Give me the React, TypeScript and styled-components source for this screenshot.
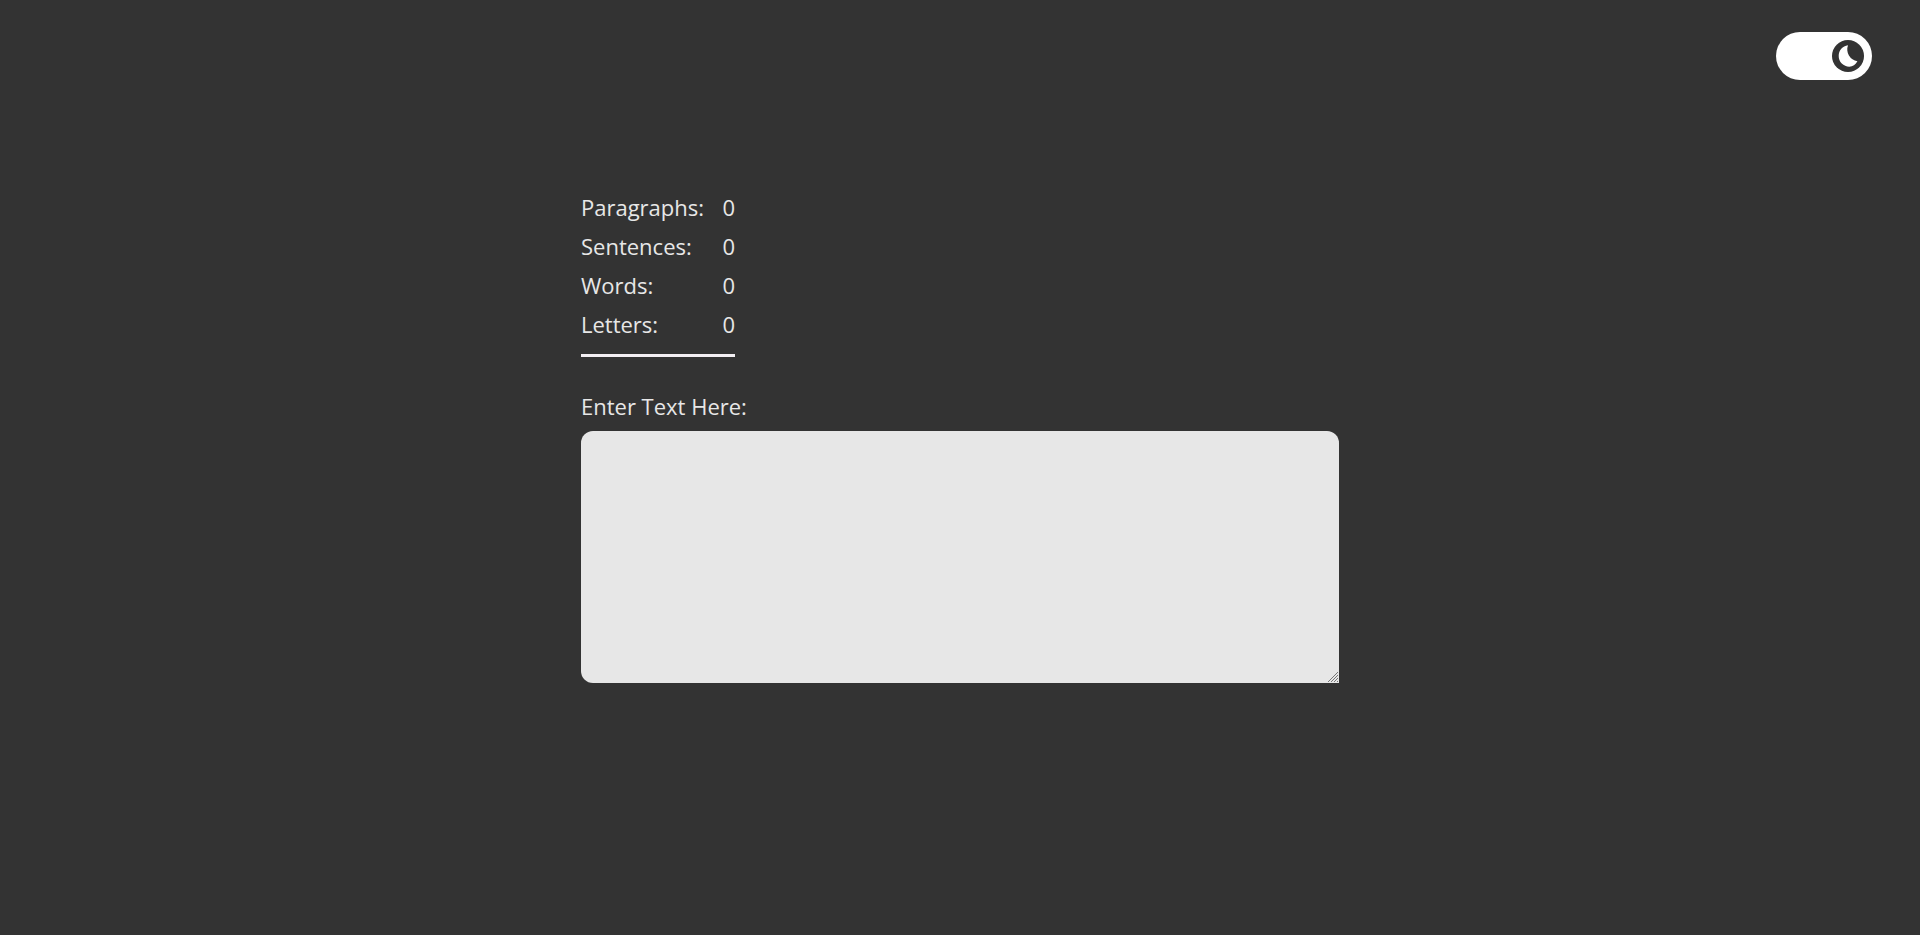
import React, { useState } from "react";
import styled, { createGlobalStyle, ThemeProvider } from "styled-components";

const dark = { page: "#333333", text: "#e7e7e7", rule: "#f3eff3", field: "#e7e7e7", track: "#ffffff", knob: "#333333" };
const light = { page: "#f3f3f3", text: "#333333", rule: "#333333", field: "#ffffff", track: "#333333", knob: "#ffffff" };

const GlobalStyle = createGlobalStyle<{ theme: typeof dark }>`
  *, *::before, *::after { box-sizing: border-box; }
  body {
    margin: 0;
    background: ${({ theme }) => theme.page};
    color: ${({ theme }) => theme.text};
    font-family: "Open Sans", "Noto Sans", sans-serif;
    font-size: 22px;
    line-height: 30px;
  }
`;

const Header = styled.header`
  display: flex;
  justify-content: flex-end;
  padding: 32px 48px;
`;

const Toggle = styled.label`
  position: relative;
  display: flex;
  align-items: center;
  width: 96px;
  height: 48px;
  padding: 8px;
  border-radius: 24px;
  background: ${({ theme }) => theme.track};
  cursor: pointer;
`;

const ToggleInput = styled.input`
  position: absolute;
  inset: 0;
  width: 100%;
  height: 100%;
  margin: 0;
  opacity: 0;
  cursor: pointer;
`;

const Knob = styled.span<{ $on: boolean }>`
  display: grid;
  place-items: center;
  width: 32px;
  height: 32px;
  margin-left: ${({ $on }) => ($on ? "auto" : "0")};
  border-radius: 50%;
  background: ${({ theme }) => theme.knob};
  color: ${({ theme }) => theme.track};
`;

const Main = styled.main`
  width: 100%;
  max-width: 806px;
  margin: 0 auto;
  padding: 80px 24px 48px;
`;

const Counts = styled.table`
  min-width: 154px;
  border-spacing: 0;
  border-bottom: 3px solid ${({ theme }) => theme.rule};
  padding-bottom: 6px;
  margin-bottom: 34px;
`;

const Name = styled.th`
  padding: 0 16px 9px 0;
  font-weight: 400;
  text-align: left;
`;

const Value = styled.td`
  padding: 0 0 9px;
  text-align: right;
`;

const FieldLabel = styled.label`
  display: block;
  margin-bottom: 10px;
`;

const FieldWrap = styled.div`
  position: relative;
  display: flex;
`;

const Field = styled.textarea`
  width: 100%;
  height: 252px;
  padding: 12px;
  border: 0;
  border-radius: 12px 12px 0 12px;
  outline: 0;
  resize: none;
  background: ${({ theme }) => theme.field};
  color: #333333;
  font: inherit;
`;

const Grip = styled.svg`
  position: absolute;
  right: 0;
  bottom: 0;
  pointer-events: none;
`;

const matches = (text: string, pattern: RegExp) => (text.match(pattern) || []).length;

export default function App() {
  const [isDark, setDark] = useState(true);
  const [text, setText] = useState("");
  const counts = [
    ["Paragraphs:", text.split(/\n+/).filter((part) => part.trim()).length],
    ["Sentences:", matches(text, /[^.!?\s][^.!?]*[.!?]+/g)],
    ["Words:", matches(text, /\S+/g)],
    ["Letters:", matches(text, /\p{L}/gu)],
  ];

  return (
    <ThemeProvider theme={isDark ? dark : light}>
      <GlobalStyle />
      <Header>
        <Toggle>
          <ToggleInput type="checkbox" aria-label="Dark mode" checked={isDark} onChange={(e) => setDark(e.target.checked)} />
          <Knob $on={isDark}>
            <svg width="32" height="32" viewBox="0 0 32 32" fill="currentColor" aria-hidden="true">
              <path d="M16 5.3C10.5 6 6.7 10.5 6.7 16A10.6 10.6 0 0 0 17.3 26.7C20.8 26.7 23.6 24.6 25.4 21.3A12 12 0 0 1 16 5.3Z" />
            </svg>
          </Knob>
        </Toggle>
      </Header>
      <Main>
        <Counts>
          <tbody>
            {counts.map(([name, value]) => (
              <tr key={name}>
                <Name scope="row">{name}</Name>
                <Value>{value}</Value>
              </tr>
            ))}
          </tbody>
        </Counts>
        <FieldLabel htmlFor="text">Enter Text Here:</FieldLabel>
        <FieldWrap>
          <Field id="text" value={text} onChange={(e) => setText(e.target.value)} />
          <Grip width="12" height="12" viewBox="0 0 12 12" stroke="#777777" aria-hidden="true">
            <path d="M1 11L11 1M4 11L11 4M7 11L11 7M10 11L11 10" />
          </Grip>
        </FieldWrap>
      </Main>
    </ThemeProvider>
  );
}
